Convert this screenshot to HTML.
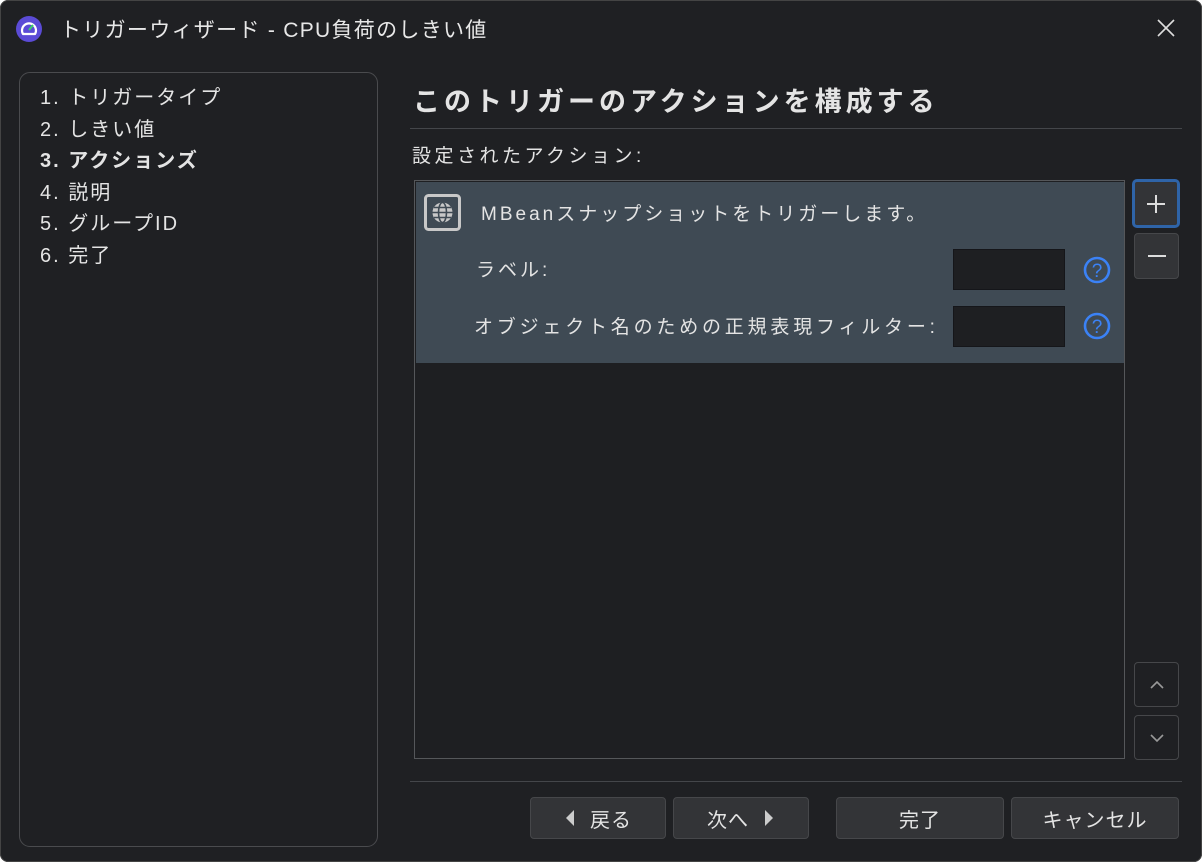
<!DOCTYPE html>
<html><head><meta charset="utf-8"><style>
*{box-sizing:border-box;margin:0;padding:0}
body{width:1202px;height:862px;background:#fff;overflow:hidden;font-family:"Liberation Sans","Noto Sans CJK JP",sans-serif;color:#e4e4e4}
.win{position:absolute;left:0;top:0;width:1202px;height:862px;background:#1f2023;box-shadow:inset 0 0 0 1px #444;border-radius:8px;overflow:hidden}
.a{position:absolute}
.t{position:absolute;white-space:nowrap}
.btn{position:absolute;background:#333437;border:1px solid #46474a;border-radius:4px;display:flex;align-items:center;justify-content:center;font-size:20px;color:#e4e4e4;letter-spacing:1px}
</style></head><body><div class="win">
<svg class="a" style="left:15px;top:15px" width="28" height="28" viewBox="0 0 28 28"><circle cx="14" cy="14" r="13" fill="#5b4bd6"/><path d="M8 19 A7 7 0 1 1 20 19 Z" fill="none" stroke="#fff" stroke-width="2.2" stroke-linejoin="round"/><path d="M14 15 L18 10" stroke="#3ccf6b" stroke-width="2"/></svg>
<div class="t" style="left:60px;top:14px;font-size:21px;color:#e8e8e8;letter-spacing:1.3px">トリガーウィザード - CPU負荷のしきい値</div>
<svg class="a" style="left:1155px;top:17px" width="22" height="22"><path d="M3 3L19 19M19 3L3 19" stroke="#ddd" stroke-width="1.6"/></svg>
<div class="a" style="left:19px;top:72px;width:359px;height:775px;border:1px solid #4a4b4e;border-radius:11px"></div>
<div class="t" style="left:40px;top:83px;font-size:20px;line-height:31.6px;letter-spacing:2px">1. トリガータイプ<br>2. しきい値<br><b>3. アクションズ</b><br>4. 説明<br>5. グループID<br>6. 完了</div>
<div class="t" style="left:413px;top:80px;font-size:27px;font-weight:bold;letter-spacing:4px">このトリガーのアクションを構成する</div>
<div class="a" style="left:410px;top:128px;width:772px;height:1px;background:#44464a"></div>
<div class="t" style="left:412px;top:141px;font-size:19px;letter-spacing:3.5px">設定されたアクション:</div>
<div class="a" style="left:414px;top:180px;width:711px;height:579px;border:1px solid #55575a;background:#1e1f22"></div>
<div class="a" style="left:416px;top:182px;width:708px;height:181px;background:#3f4a54"></div>
<svg class="a" style="left:424px;top:194px" width="37" height="37" viewBox="0 0 37 37"><rect x="1.5" y="1.5" width="34" height="34" rx="3" fill="none" stroke="#c8c8c8" stroke-width="3"/><circle cx="18.5" cy="18.5" r="10" fill="#c8c8c8"/><g stroke="#3f4a54" stroke-width="1.6" fill="none"><ellipse cx="18.5" cy="18.5" rx="4" ry="10"/><path d="M8.5 18.5H28.5M10 13.5H27M10 23.5H27"/></g></svg>
<div class="t" style="left:481px;top:199px;font-size:19px;letter-spacing:3px">MBeanスナップショットをトリガーします。</div>
<div class="t" style="left:476px;top:255px;font-size:19px;letter-spacing:3px">ラベル:</div>
<div class="t" style="left:474px;top:312px;font-size:19px;letter-spacing:3.8px">オブジェクト名のための正規表現フィルター:</div>
<div class="a" style="left:953px;top:249px;width:112px;height:41px;background:#1e1f22;border:1px solid #15161a"></div>
<div class="a" style="left:953px;top:306px;width:112px;height:41px;background:#1e1f22;border:1px solid #15161a"></div>
<svg class="a" style="left:1083px;top:256px" width="28" height="28"><circle cx="14" cy="14" r="12" fill="none" stroke="#3b82f6" stroke-width="2.6"/><text x="14" y="21" font-size="19" fill="#3b82f6" text-anchor="middle" font-family="Liberation Sans">?</text></svg>
<svg class="a" style="left:1083px;top:312px" width="28" height="28"><circle cx="14" cy="14" r="12" fill="none" stroke="#3b82f6" stroke-width="2.6"/><text x="14" y="21" font-size="19" fill="#3b82f6" text-anchor="middle" font-family="Liberation Sans">?</text></svg>
<div class="btn" style="left:1132px;top:179px;width:48px;height:49px;border:3px solid #2f64a8;border-radius:5px"><svg width="20" height="20"><path d="M10 1V19M1 10H19" stroke="#ddd" stroke-width="2"/></svg></div>
<div class="btn" style="left:1134px;top:233px;width:45px;height:46px"><svg width="20" height="20"><path d="M1 10H19" stroke="#ddd" stroke-width="2"/></svg></div>
<div class="btn" style="left:1134px;top:662px;width:45px;height:45px;background:#1f2023"><svg width="16" height="10"><path d="M2 8L8 2L14 8" stroke="#999" stroke-width="1.6" fill="none"/></svg></div>
<div class="btn" style="left:1134px;top:715px;width:45px;height:45px;background:#1f2023"><svg width="16" height="10"><path d="M2 2L8 8L14 2" stroke="#999" stroke-width="1.6" fill="none"/></svg></div>
<div class="a" style="left:410px;top:781px;width:772px;height:1px;background:#44464a"></div>
<div class="btn" style="left:530px;top:797px;width:136px;height:42px"><svg width="12" height="18" style="margin-right:14px"><path d="M10 1V17L2 9Z" fill="#ccc"/></svg>戻る</div>
<div class="btn" style="left:673px;top:797px;width:136px;height:42px">次へ<svg width="12" height="18" style="margin-left:14px"><path d="M2 1V17L10 9Z" fill="#ccc"/></svg></div>
<div class="btn" style="left:836px;top:797px;width:168px;height:42px">完了</div>
<div class="btn" style="left:1011px;top:797px;width:168px;height:42px">キャンセル</div>
</div></body></html>
